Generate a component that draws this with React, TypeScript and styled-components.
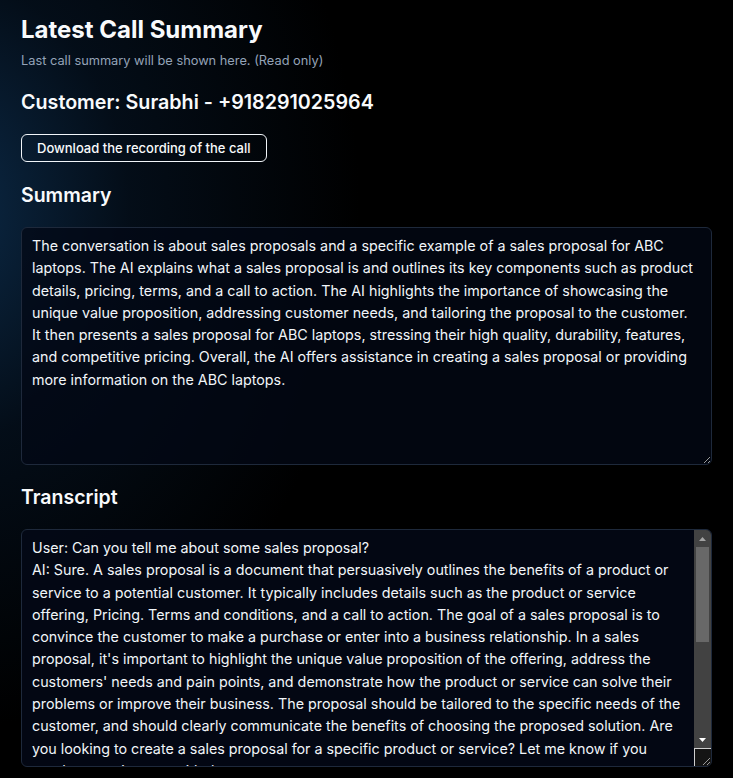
import React from "react";
import styled, { createGlobalStyle } from "styled-components";

const Global = createGlobalStyle`
  html, body { margin: 0; padding: 0; background: #000; }
  body {
    font-family: Inter, "Noto Sans", sans-serif;
    color: #f8fafc;
    color-scheme: dark;
  }
  * { box-sizing: border-box; }
`;

const Page = styled.div`
  min-height: 778px;
  padding: 14px 21px 10px 21px;
  background: radial-gradient(ellipse 420px 520px at -60px 210px, rgba(14, 50, 85, 0.85) 0%, rgba(6, 22, 40, 0.6) 45%, rgba(0, 0, 0, 0) 100%), #000;
  display: flex;
  flex-direction: column;
`;

const Title = styled.h1`
  margin: 0;
  font-size: 24px;
  font-weight: 700;
  line-height: 32px;
`;

const Subtitle = styled.p`
  margin: 6px 0 0 0;
  font-size: 12.8px;
  line-height: 18px;
  color: #94a3b8;
`;

const Customer = styled.h2`
  margin: 18px 0 0 0;
  font-size: 19.7px;
  font-weight: 600;
  line-height: 28px;
`;

const DownloadButton = styled.button`
  align-self: flex-start;
  margin-top: 18px;
  height: 28px;
  padding: 0 15px;
  border: 1px solid #f1f5f9;
  border-radius: 6px;
  background: transparent;
  color: #f8fafc;
  font-family: Inter, sans-serif;
  font-size: 13px;
  font-weight: 500;
  cursor: pointer;
`;

const SectionHeading = styled.h3<{ $top: number }>`
  margin: ${(p) => p.$top}px 0 0 0;
  font-size: 19.5px;
  font-weight: 600;
  line-height: 28px;
`;

const boxText = `
  font-family: Inter, sans-serif;
  font-size: 14.3px;
  line-height: 22.3px;
  color: #f1f5f9;
`;

const SummaryBox = styled.textarea`
  margin-top: 18px;
  width: 100%;
  height: 238px;
  padding: 7px 14px 7px 10px;
  border: 1px solid #1e293b;
  border-radius: 6px;
  background: rgba(3, 8, 22, 0.75);
  ${boxText}
  resize: vertical;
  outline: none;
`;

const TranscriptFrame = styled.div`
  margin-top: 18px;
  height: 238px;
  display: flex;
  border: 1px solid #1e293b;
  border-radius: 6px;
  overflow: hidden;
  background: rgba(3, 8, 22, 0.85);
`;

const TranscriptArea = styled.textarea`
  flex: 1;
  min-width: 0;
  height: 100%;
  padding: 7px 10px;
  border: none;
  background: transparent;
  ${boxText}
  resize: none;
  outline: none;
  overflow: hidden;
`;

const ScrollRail = styled.div`
  width: 17px;
  flex: none;
  display: flex;
  flex-direction: column;
  background: #424242;
`;

const ArrowButton = styled.div`
  height: 17px;
  flex: none;
  display: flex;
  align-items: center;
  justify-content: center;
`;

const Track = styled.div`
  flex: 1;
  padding: 0 2px;
`;

const Thumb = styled.div`
  height: 95px;
  background: #686868;
`;

const Corner = styled.div`
  height: 18px;
  flex: none;
  background: #141414;
  border-top: 1px solid #cfcfcf;
  border-left: 1px solid #cfcfcf;
  display: flex;
  align-items: flex-end;
  justify-content: flex-end;
`;

const summary =
  "The conversation is about sales proposals and a specific example of a sales proposal for ABC laptops. The AI explains what a sales proposal is and outlines its key components such as product details, pricing, terms, and a call to action. The AI highlights the importance of showcasing the unique value proposition, addressing customer needs, and tailoring the proposal to the customer. It then presents a sales proposal for ABC laptops, stressing their high quality, durability, features, and competitive pricing. Overall, the AI offers assistance in creating a sales proposal or providing more information on the ABC laptops.";

const transcript =
  "User: Can you tell me about some sales proposal?\nAI: Sure. A sales proposal is a document that persuasively outlines the benefits of a product or service to a potential customer. It typically includes details such as the product or service offering, Pricing. Terms and conditions, and a call to action. The goal of a sales proposal is to convince the customer to make a purchase or enter into a business relationship. In a sales proposal, it's important to highlight the unique value proposition of the offering, address the customers' needs and pain points, and demonstrate how the product or service can solve their problems or improve their business. The proposal should be tailored to the specific needs of the customer, and should clearly communicate the benefits of choosing the proposed solution. Are you looking to create a sales proposal for a specific product or service? Let me know if you need any assistance with that.\nUser: Can you give me a sales proposal for ABC laptops?\nAI: Certainly. Here is a sales proposal for ABC laptops. ABC laptops are built with high quality materials that ensure durability and long life. They come packed with powerful features, including fast processors, long battery life, and brilliant displays, all at a competitive price. Would you like more information on the ABC laptops or help with anything else?";

export default function App() {
  return (
    <>
      <Global />
      <Page>
        <Title>Latest Call Summary</Title>
        <Subtitle>Last call summary will be shown here. (Read only)</Subtitle>
        <Customer>Customer: Surabhi - +918291025964</Customer>
        <DownloadButton>Download the recording of the call</DownloadButton>
        <SectionHeading $top={19}>Summary</SectionHeading>
        <SummaryBox readOnly value={summary} />
        <SectionHeading $top={18}>Transcript</SectionHeading>
        <TranscriptFrame>
          <TranscriptArea readOnly value={transcript} />
          <ScrollRail>
            <ArrowButton>
              <svg width="7" height="4" viewBox="0 0 7 4">
                <path d="M0 4 L3.5 0 L7 4 Z" fill="#a3a3a3" />
              </svg>
            </ArrowButton>
            <Track>
              <Thumb />
            </Track>
            <ArrowButton>
              <svg width="7" height="4" viewBox="0 0 7 4">
                <path d="M0 0 L3.5 4 L7 0 Z" fill="#ffffff" />
              </svg>
            </ArrowButton>
            <Corner>
              <svg width="10" height="10" viewBox="0 0 10 10">
                <path d="M9 2 L2 9 M9 6 L6 9" stroke="#9a9a9a" strokeWidth="1" />
              </svg>
            </Corner>
          </ScrollRail>
        </TranscriptFrame>
      </Page>
    </>
  );
}
